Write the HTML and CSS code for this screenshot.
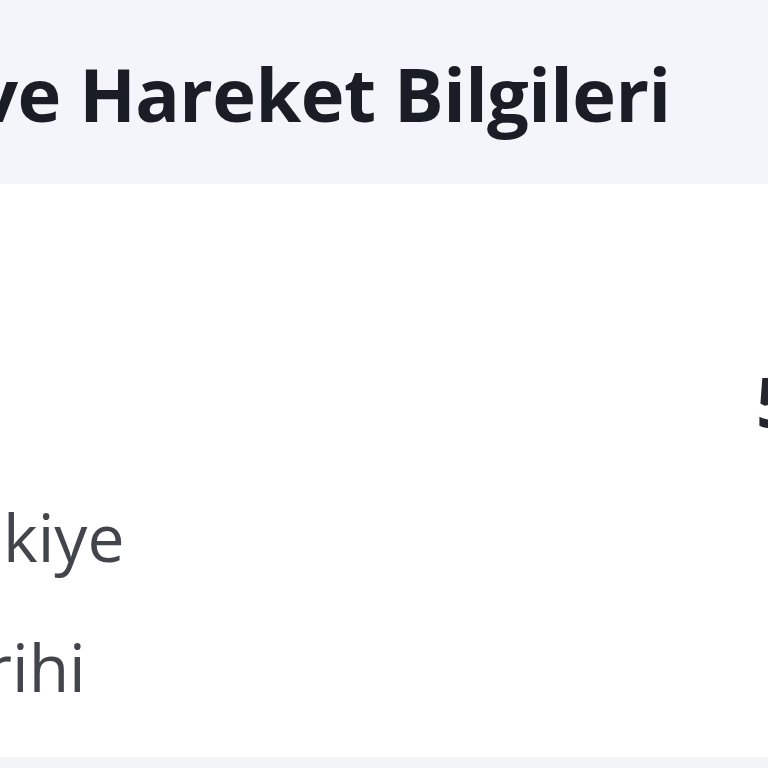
FILE: index.html
```html
<!DOCTYPE html>
<html lang="tr">
<head>
<meta charset="utf-8">
<link rel="stylesheet" href="styles.css">
</head>
<body>
<div class="page">
  <header class="head">
    <h1 class="title"><span class="cut">Gönderi </span>ve Hareket Bilgileri</h1>
  </header>
  <section class="card">
    <div class="row row-value">
      <span class="value">5</span>
    </div>
    <div class="row">
      <span class="label label-country"><span class="cut">Çıkış Ülkesi: Tür</span>kiye</span>
    </div>
    <div class="row">
      <span class="label label-date"><span class="cut">Hareket Ta</span>rihi</span>
    </div>
  </section>
  <div class="foot"></div>
</div>
</body>
</html>
```

FILE: styles.css
```css
html, body {
  margin: 0;
  padding: 0;
  background: #ffffff;
}
.page {
  width: 768px;
  height: 768px;
  overflow: hidden;
  display: flex;
  flex-direction: column;
  font-family: "Open Sans", "Noto Sans", sans-serif;
}
.head {
  height: 184px;
  background: #f4f5fa;
  display: flex;
  align-items: flex-start;
  flex-shrink: 0;
}
.title {
  margin: 0;
  padding-top: 49px;
  font-size: 74px;
  line-height: 90px;
  font-weight: 700;
  color: #1b1d26;
  white-space: nowrap;
  letter-spacing: -0.6px;
}
.cut {
  display: inline-block;
  vertical-align: top;
  width: 600px;
  text-align: right;
  white-space: pre;
  overflow: hidden;
}
.title .cut {
  margin-left: -624px;
}
.card {
  flex: 1;
  display: flex;
  flex-direction: column;
}
.row {
  height: 130px;
  display: flex;
  align-items: flex-end;
  white-space: nowrap;
}
.row-value {
  height: 262px;
  padding-left: 756px;
  padding-bottom: 10px;
  box-sizing: border-box;
}
.value {
  font-size: 70px;
  line-height: 70px;
  font-weight: 700;
  color: #24262d;
}
.label {
  font-size: 66px;
  line-height: 80px;
  color: #43454c;
}
.label-country .cut {
  margin-left: -600px;
  margin-right: 3px;
}
.label-date .cut {
  margin-left: -615px;
}
.foot {
  height: 11px;
  background: #f3f4f7;
  flex-shrink: 0;
}
```
